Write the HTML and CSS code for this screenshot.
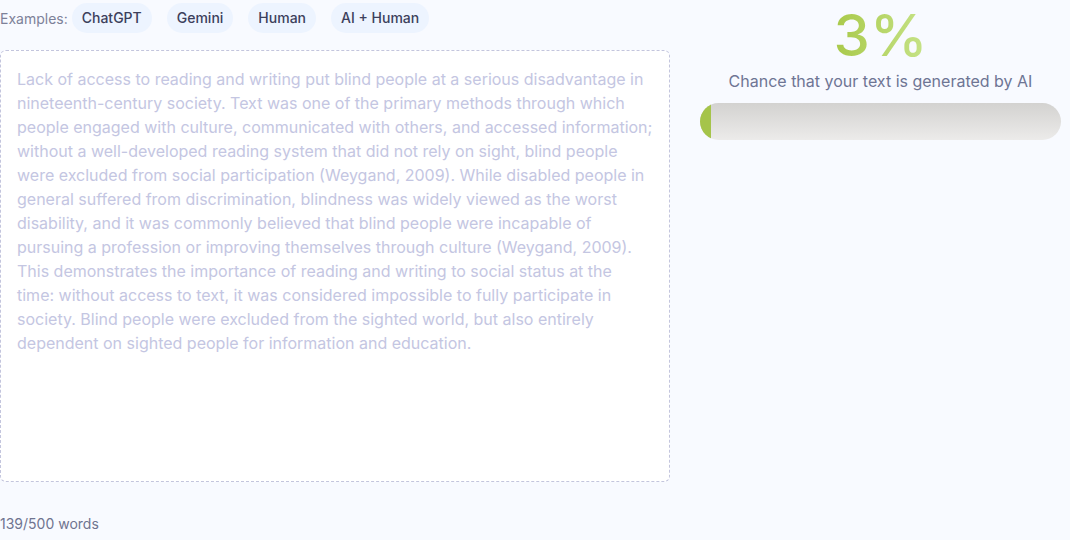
FILE: index.html
```html
<!DOCTYPE html>
<html>
<head>
<meta charset="utf-8">
<link rel="stylesheet" href="styles.css">
</head>
<body>
<div class="page">
  <div class="left">
    <div class="examples">
      <span class="ex-label">Examples:</span>
      <span class="chip">ChatGPT</span>
      <span class="chip">Gemini</span>
      <span class="chip">Human</span>
      <span class="chip">AI + Human</span>
    </div>
    <div class="editor">Lack of access to reading and writing put blind people at a serious disadvantage in nineteenth-century society. Text was one of the primary methods through which people engaged with culture, communicated with others, and accessed information; without a well-developed reading system that did not rely on sight, blind people were excluded from social participation (Weygand, 2009). While disabled people in general suffered from discrimination, blindness was widely viewed as the worst disability, and it was commonly believed that blind people were incapable of pursuing a profession or improving themselves through culture (Weygand, 2009). This demonstrates the importance of reading and writing to social status at the time: without access to text, it was considered impossible to fully participate in society. Blind people were excluded from the sighted world, but also entirely dependent on sighted people for information and education.</div>
    <div class="count">139/500 words</div>
  </div>
  <div class="right">
    <div class="pct">3%</div>
    <div class="caption">Chance that your text is generated by AI</div>
    <div class="bar"><div class="fill" style="width:3%"></div></div>
  </div>
</div>
</body>
</html>
```

FILE: styles.css
```css
html, body {
  margin: 0;
  padding: 0;
  background: #f8faff;
  font-family: Inter, "Noto Sans", sans-serif;
}
.page {
  display: flex;
  gap: 30px;
  width: 1070px;
  height: 540px;
}
.left {
  width: 670px;
  display: flex;
  flex-direction: column;
}
.examples {
  display: flex;
  align-items: center;
  gap: 15px;
  padding-top: 3px;
  height: 30px;
}
.ex-label {
  font-size: 14px;
  color: #7d8199;
  margin-right: -11px;
}
.chip {
  background: #edf4ff;
  border-radius: 16px;
  height: 30px;
  line-height: 30px;
  padding: 0 10px;
  font-size: 14px;
  font-weight: 500;
  color: #3c405c;
}
.editor {
  margin-top: 17px;
  box-sizing: border-box;
  width: 670px;
  height: 432px;
  background: #fff;
  border: 1px dashed #c3c5dd;
  border-radius: 6px;
  padding: 16px 16px;
  font-size: 16px;
  line-height: 24px;
  color: #c4c6e2;
}
.count {
  margin-top: 33px;
  font-size: 14px;
  color: #6f7490;
}
.right {
  width: 361px;
  display: flex;
  flex-direction: column;
  align-items: center;
}
.pct {
  margin-top: 4px;
  font-size: 58px;
  line-height: 62px;
  font-weight: 500;
  background: linear-gradient(90deg, #a9c94a 0%, #c6e388 100%);
  -webkit-background-clip: text;
  background-clip: text;
  color: transparent;
}
.caption {
  margin-top: 4px;
  font-size: 16px;
  line-height: 22px;
  color: #6e7594;
}
.bar {
  margin-top: 11px;
  width: 361px;
  height: 37px;
  border-radius: 19px;
  background: linear-gradient(180deg, #d3d2d0 0%, #ecebea 100%);
  overflow: hidden;
  display: flex;
}
.fill {
  background: #a5c44a;
  height: 100%;
}
```
